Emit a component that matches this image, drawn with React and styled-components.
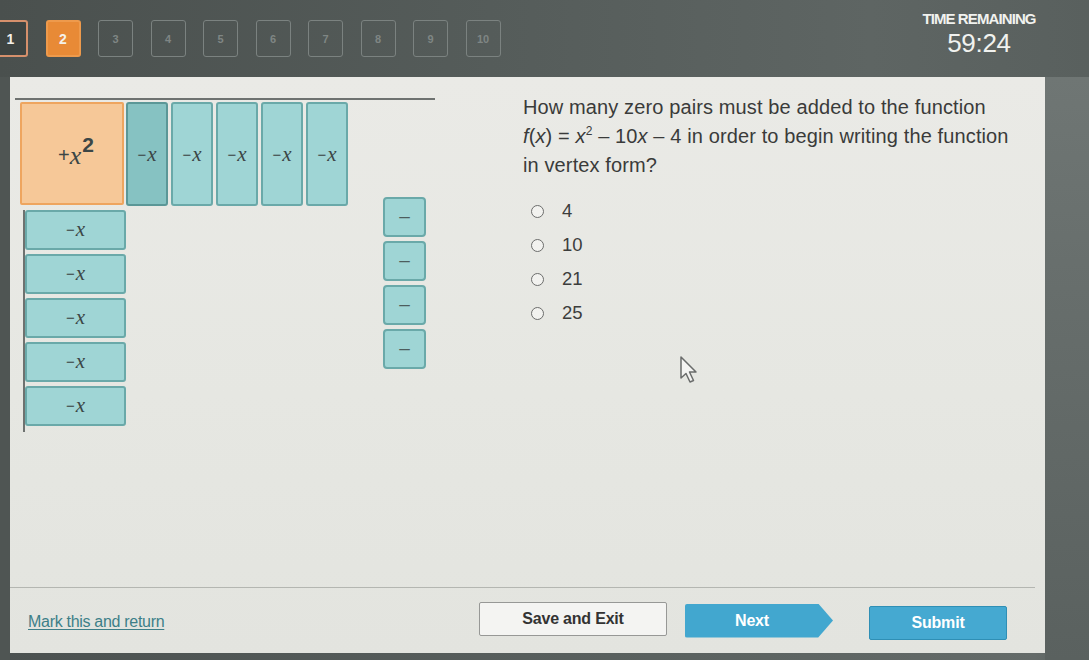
import React from "react";
import styled, { createGlobalStyle } from "styled-components";

const Global = createGlobalStyle`
  html, body { margin: 0; padding: 0; background: #545a58; }
  body { font-family: "Liberation Sans", Arial, sans-serif; }
  * { box-sizing: border-box; }
`;

const Page = styled.div`
  position: relative;
  width: 1089px;
  height: 660px;
  overflow: hidden;
  display: flex;
  flex-direction: column;
  background: linear-gradient(90deg, #4b5150 0%, #5a615f 60%, #646b69 95%, #5b6260 100%);
`;

/* ---------- header ---------- */
const Header = styled.header`
  height: 77px;
  flex: none;
  display: flex;
  align-items: flex-start;
  justify-content: space-between;
  padding: 0 45px 0 0;
  background: linear-gradient(90deg, #4a504e 0%, #555c5a 45%, #5e6563 80%, #59605e 100%);
`;

const Nav = styled.nav`
  display: flex;
  gap: 17.5px;
  margin: 20px 0 0 -7px;
`;

const NavBox = styled.div`
  width: 35px;
  height: 37px;
  border-radius: 3px;
  display: flex;
  align-items: center;
  justify-content: center;
  font-family: "Liberation Sans", Arial, sans-serif;
  font-weight: bold;
  font-size: ${(p) => (p.$state === "idle" ? "11px" : "14px")};
  color: ${(p) => (p.$state === "idle" ? "#7f8684" : "#f4f1ea")};
  background: ${(p) =>
    p.$state === "current" ? "#e88a36" : p.$state === "done" ? "#3e4442" : "transparent"};
  border: ${(p) =>
    p.$state === "current"
      ? "2px solid #ee9a4c"
      : p.$state === "done"
      ? "2px solid #d6906c"
      : "1.5px solid #7b8280"};
`;

const Timer = styled.div`
  width: 130px;
  margin-top: 10px;
  display: flex;
  flex-direction: column;
  align-items: center;
  color: #f1f2ef;
`;

const TimerLabel = styled.div`
  font-family: "Liberation Sans", Arial, sans-serif;
  font-weight: bold;
  font-size: 15px;
  letter-spacing: -0.9px;
  line-height: 18px;
`;

const TimerValue = styled.div`
  font-family: "Liberation Sans", Arial, sans-serif;
  font-size: 26px;
  line-height: 30px;
  letter-spacing: -0.3px;
`;

/* ---------- body ---------- */
const Body = styled.div`
  flex: 1;
  display: flex;
  min-height: 0;
`;

const Gutter = styled.div`
  width: ${(p) => p.$w}px;
  flex: none;
  background: ${(p) => p.$bg};
`;

const Panel = styled.main`
  width: 1035px;
  flex: none;
  height: 576px;
  display: flex;
  flex-direction: column;
  background: linear-gradient(180deg, #eaeae6 0%, #e6e7e2 55%, #e3e4df 100%);
`;

const Content = styled.section`
  flex: 1;
  display: flex;
  align-items: flex-start;
`;

/* algebra-tile mat */
const Mat = styled.div`
  width: 420px;
  margin: 21px 0 0 5px;
  border-top: 2px solid #6e7270;
  display: grid;
  grid-template-columns: 1fr 52px;
`;

const MatMain = styled.div`
  display: flex;
  flex-direction: column;
`;

const TopRow = styled.div`
  display: flex;
  margin: 2px 0 0 5px;
`;

const Tile = styled.div`
  display: flex;
  align-items: center;
  justify-content: center;
  border-radius: 3px;
  color: #3b4646;
  font-family: "Liberation Serif", "Times New Roman", serif;
  font-style: italic;
  font-size: 21px;
  background: ${(p) => (p.$dark ? "#86c2c2" : "#9fd5d5")};
  border: 2px solid ${(p) => (p.$dark ? "#5b9797" : "#6aa9a9")};
`;

const Minus = styled.span`
  font-style: normal;
  font-family: "Liberation Sans", Arial, sans-serif;
  font-size: 15px;
  margin-right: 1px;
`;

const SquareTile = styled(Tile)`
  width: 104px;
  height: 103px;
  margin-right: 2px;
  border-radius: 2px;
  background: #f6c898;
  border: 2px solid #eea55f;
  font-size: 26px;
  padding: 4px 0 0 8px;

  sup {
    font-family: "Liberation Sans", Arial, sans-serif;
    font-style: normal;
    font-weight: bold;
    font-size: 21px;
    margin-left: 1px;
    position: relative;
    top: -11px;
  }
`;

const Plus = styled.span`
  font-style: normal;
  font-family: "Liberation Sans", Arial, sans-serif;
  font-size: 20px;
  margin-right: 0;
`;

const VTiles = styled.div`
  display: flex;
  gap: 3px;
`;

const VTile = styled(Tile)`
  width: 42px;
  height: 104px;
`;

const SideColumn = styled.div`
  display: flex;
  flex-direction: column;
  gap: 4px;
  margin: 4px 0 0 8px;
  padding: 0 0 6px 0;
  border-left: 2px solid #6e7270;
`;

const HTile = styled(Tile)`
  width: 101px;
  height: 40px;
  padding-bottom: 2px;
`;

const UnitColumn = styled.div`
  display: flex;
  flex-direction: column;
  gap: 4px;
  padding-top: 97px;
`;

const UnitTile = styled(Tile)`
  width: 43px;
  height: 40px;
  border-radius: 4px;
  font-family: "Liberation Sans", Arial, sans-serif;
  font-style: normal;
  font-size: 19px;
  color: #4d5d5d;
  padding-bottom: 3px;
`;

/* question */
const Question = styled.div`
  margin: 16px 0 0 88px;
  color: #3a3b3a;
  font-family: "Liberation Sans", Arial, sans-serif;
`;

const Prompt = styled.p`
  margin: 0;
  font-size: 20px;
  line-height: 29px;
  letter-spacing: 0.12px;
  white-space: nowrap;

  i { font-style: italic; }
  sup { font-size: 12px; line-height: 0; }
`;

const Options = styled.div`
  margin-top: 14px;
  display: flex;
  flex-direction: column;
`;

const Option = styled.label`
  height: 34px;
  display: flex;
  align-items: center;
  font-size: 18.5px;
  color: #3c3d3c;
  padding-left: 8px;
`;

const Radio = styled.span`
  width: 13px;
  height: 13px;
  border-radius: 50%;
  border: 1.5px solid #6c6d6c;
  background: #f2f2ef;
  margin-right: 18px;
`;

/* footer */
const Footer = styled.footer`
  height: 66px;
  flex: none;
  border-top: 1px solid #b4b6b1;
  margin: 0 10px 0 0;
  display: flex;
  align-items: center;
  padding: 0 28px 0 18px;
`;

const MarkLink = styled.a`
  font-family: "Liberation Sans", Arial, sans-serif;
  font-size: 16px;
  letter-spacing: -0.3px;
  color: #3d7f88;
  text-decoration: underline;
  text-underline-offset: 2px;
  margin-top: 2px;
`;

const Buttons = styled.div`
  margin-left: auto;
  display: flex;
  align-items: center;
`;

const Button = styled.button`
  height: 34px;
  font-family: "Liberation Sans", Arial, sans-serif;
  font-weight: bold;
  font-size: 16px;
  letter-spacing: -0.2px;
  border-radius: 2px;
  cursor: pointer;
  padding: 0;
`;

const SaveButton = styled(Button)`
  width: 188px;
  background: #f4f4f2;
  color: #333;
  border: 1px solid #979896;
  margin-right: 18px;
  margin-top: -4px;
`;

const NextButton = styled(Button)`
  width: 148px;
  background: #42a7cf;
  color: #fff;
  border: none;
  padding-right: 14px;
  clip-path: polygon(0 0, 90% 0, 100% 50%, 90% 100%, 0 100%);
  margin-right: 36px;
`;

const SubmitButton = styled(Button)`
  width: 138px;
  background: #45a9d1;
  color: #fff;
  border: 1px solid #2f8fb5;
  margin-top: 4px;
`;

const Pointer = styled.svg`
  position: absolute;
  left: 679px;
  top: 355px;
  width: 22px;
  height: 30px;
  pointer-events: none;
`;

function NegX() {
  return (
    <>
      <Minus>−</Minus>x
    </>
  );
}

export default function App() {
  const nav = Array.from({ length: 10 }, (_, i) => i + 1);
  const options = ["4", "10", "21", "25"];

  return (
    <>
      <Global />
      <Page>
        <Header>
          <Nav>
            {nav.map((n) => (
              <NavBox key={n} $state={n === 1 ? "done" : n === 2 ? "current" : "idle"}>
                {n}
              </NavBox>
            ))}
          </Nav>
          <Timer>
            <TimerLabel>TIME REMAINING</TimerLabel>
            <TimerValue>59:24</TimerValue>
          </Timer>
        </Header>

        <Body>
          <Gutter $w={10} $bg="#4f5553" />
          <Panel>
            <Content>
              <Mat>
                <MatMain>
                  <TopRow>
                    <SquareTile>
                      <Plus>+</Plus>x<sup>2</sup>
                    </SquareTile>
                    <VTiles>
                      {[0, 1, 2, 3, 4].map((i) => (
                        <VTile key={i} $dark={i === 0}>
                          <NegX />
                        </VTile>
                      ))}
                    </VTiles>
                  </TopRow>
                  <SideColumn>
                    {[0, 1, 2, 3, 4].map((i) => (
                      <HTile key={i}>
                        <NegX />
                      </HTile>
                    ))}
                  </SideColumn>
                </MatMain>
                <UnitColumn>
                  {[0, 1, 2, 3].map((i) => (
                    <UnitTile key={i}>–</UnitTile>
                  ))}
                </UnitColumn>
              </Mat>

              <Question>
                <Prompt>
                  How many zero pairs must be added to the function
                  <br />
                  <i>f</i>(<i>x</i>) = <i>x</i>
                  <sup>2</sup> – 10<i>x</i> – 4 in order to begin writing the function
                  <br />
                  in vertex form?
                </Prompt>
                <Options>
                  {options.map((o) => (
                    <Option key={o}>
                      <Radio />
                      {o}
                    </Option>
                  ))}
                </Options>
              </Question>
            </Content>

            <Footer>
              <MarkLink>Mark this and return</MarkLink>
              <Buttons>
                <SaveButton>Save and Exit</SaveButton>
                <NextButton>Next</NextButton>
                <SubmitButton>Submit</SubmitButton>
              </Buttons>
            </Footer>
          </Panel>
          <Gutter $w={44} $bg="linear-gradient(180deg, #6f7674 0%, #646b69 50%, #5a615f 100%)" />
        </Body>

        <Pointer viewBox="0 0 22 30">
          <path
            d="M2 2 L2 23 L7 18.5 L11 27 L14.5 25.5 L10.5 17 L17 17 Z"
            fill="#f4f4f2"
            stroke="#6a6c6b"
            strokeWidth="1.5"
            strokeLinejoin="round"
          />
        </Pointer>
      </Page>
    </>
  );
}
